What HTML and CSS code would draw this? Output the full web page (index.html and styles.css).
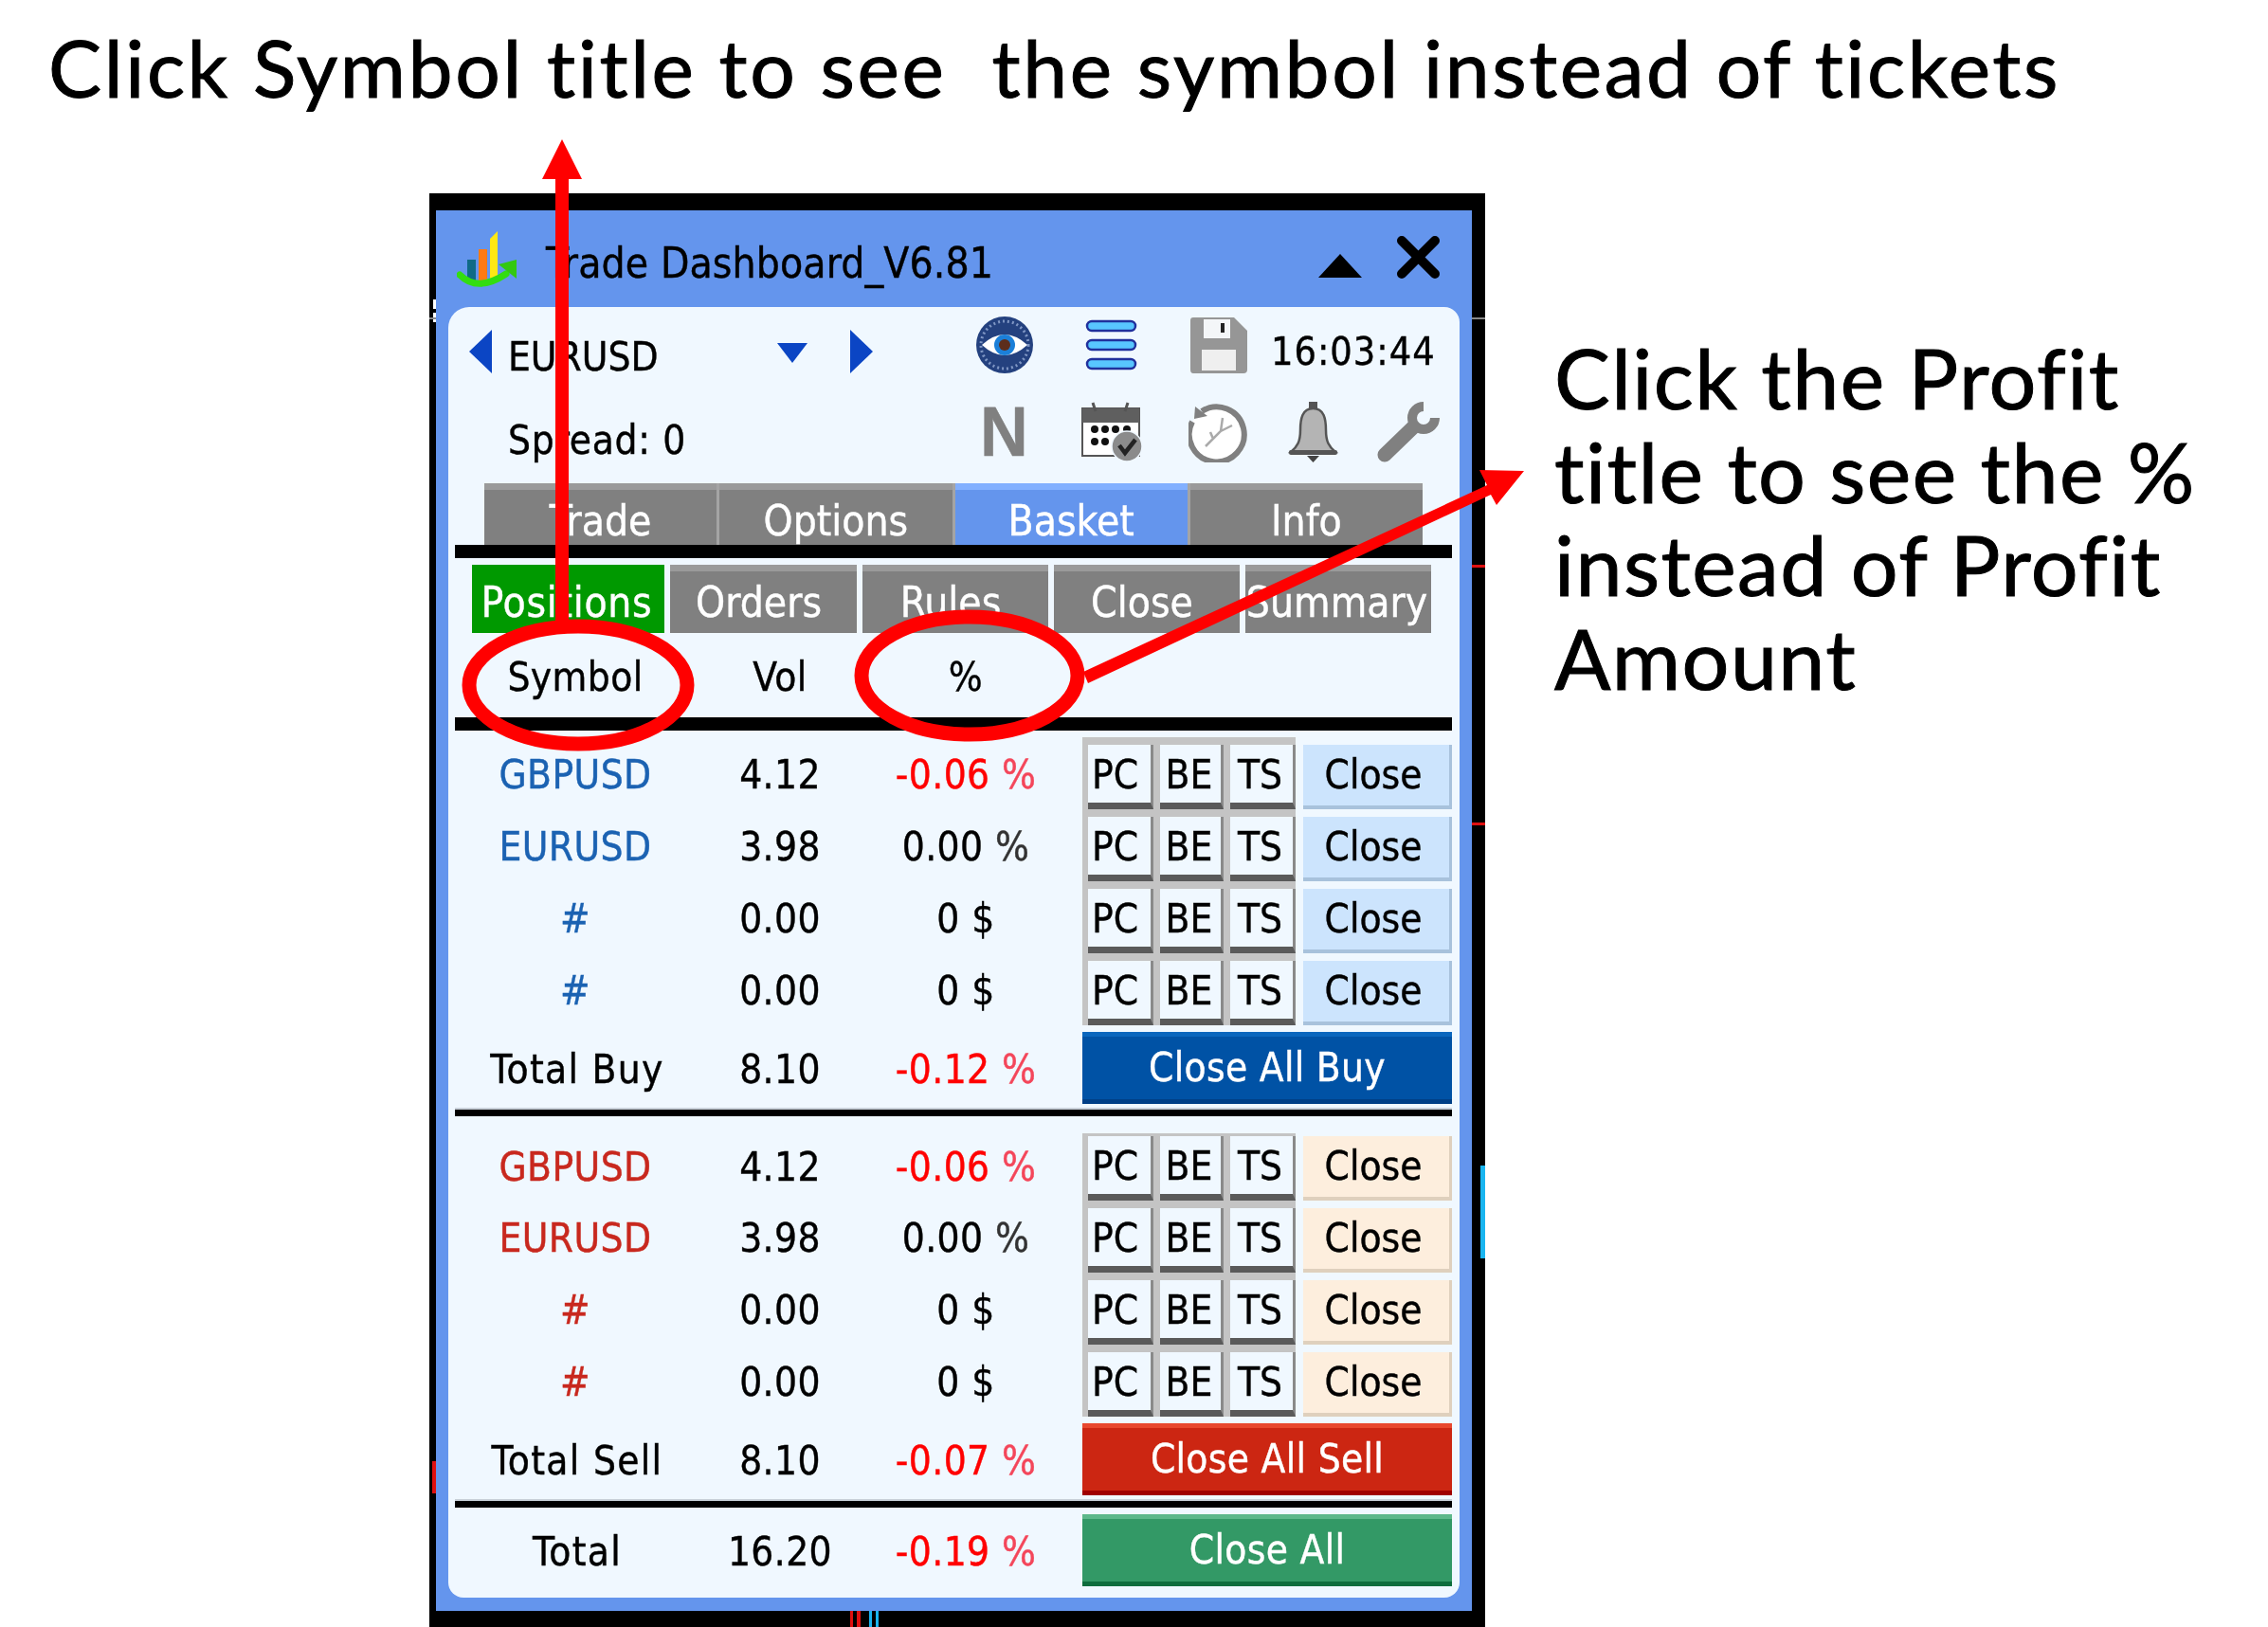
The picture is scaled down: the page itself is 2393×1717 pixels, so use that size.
FILE: index.html
```html
<!DOCTYPE html>
<html lang="en">
<head>
<meta charset="utf-8">
<title>Trade Dashboard</title>
<link rel="stylesheet" href="styles.css">
</head>
<body>
<p class="caption">Click Symbol title to see&nbsp; the symbol instead of tickets</p>
<div class="stage">
  <div class="window">
    <span class="mark mark-dots"></span>
    <span class="mark mark-g1"></span>
    <span class="mark mark-g2"></span>
    <span class="mark mark-r1"></span>
    <span class="mark mark-r2"></span>
    <span class="mark mark-r3"></span>
    <span class="mark mark-b1"></span>
    <span class="mark mark-b2"></span>
    <span class="mark mark-b3"></span>
    <div class="chrome">
      <div class="titlebar">
        <svg class="logo" width="66" height="68" viewBox="0 0 66 68">
          <rect x="11" y="33" width="9" height="24" fill="#0f6a86"/>
          <rect x="23" y="22" width="9" height="36" fill="#ff7a12"/>
          <path d="M35 11 L43 3 V54 H35Z" fill="#ffe814"/>
          <path d="M3 49 Q22 68 52 48" fill="none" stroke="#33dd11" stroke-width="7" stroke-linecap="round"/>
          <path d="M44 38 L63 33 V53Z" fill="#33c811"/>
        </svg>
        <span class="title">Trade Dashboard_V6.81</span>
        <svg class="tri-up" width="46" height="25" viewBox="0 0 46 25"><path d="M23 0 L46 25 H0Z" fill="#000"/></svg>
        <svg class="close-x" width="47" height="47" viewBox="0 0 47 47"><path d="M6 6 L41 41 M41 6 L6 41" stroke="#000" stroke-width="10" stroke-linecap="round"/></svg>
      </div>
      <div class="panel">
        <div class="tools tools-a">
          <span></span>
          <svg class="arrow" width="24" height="46" viewBox="0 0 24 46"><path d="M24 0 V46 L0 23Z" fill="#0b45c4"/></svg>
          <span class="pair">EURUSD</span>
          <svg class="arrow arrow-down" width="32" height="21" viewBox="0 0 32 21"><path d="M0 0 H32 L16 21Z" fill="#0b45c4"/></svg>
          <svg class="arrow" width="24" height="46" viewBox="0 0 24 46"><path d="M0 0 V46 L24 23Z" fill="#0b45c4"/></svg>
          <svg width="62" height="60" viewBox="0 0 62 60">
            <circle cx="31" cy="30" r="30" fill="#24417f"/>
            <circle cx="31" cy="30" r="25" fill="none" stroke="#7f96c4" stroke-width="3" stroke-dasharray="2 3"/>
            <path d="M7 30 Q31 8 55 30 Q31 52 7 30Z" fill="#fff"/>
            <circle cx="31" cy="30" r="11" fill="#1b7fd8"/>
            <circle cx="31" cy="30" r="6" fill="#5c2d1c"/>
          </svg>
          <svg width="55" height="56" viewBox="0 0 55 56">
            <rect x="2" y="3" width="51" height="10" rx="5" fill="#58c6ff" stroke="#20309c" stroke-width="2.5"/>
            <rect x="2" y="23" width="51" height="10" rx="5" fill="#58c6ff" stroke="#20309c" stroke-width="2.5"/>
            <rect x="2" y="43" width="51" height="10" rx="5" fill="#58c6ff" stroke="#20309c" stroke-width="2.5"/>
          </svg>
          <svg width="62" height="60" viewBox="0 0 62 60">
            <path d="M4 1 H47 L61 15 V56 Q61 60 57 60 H4 Q1 60 1 56 V4 Q1 1 4 1Z" fill="#969696"/>
            <rect x="15" y="3" width="28" height="20" fill="#f4f6f8"/>
            <rect x="33" y="7" width="4" height="10" fill="#222"/>
            <rect x="13" y="35" width="36" height="22" fill="#efefef"/>
          </svg>
          <span class="clock-text">16:03:44</span>
        </div>
        <div class="tools tools-b">
          <span></span>
          <span class="spread">Spread: 0</span>
          <span class="news">N</span>
          <svg width="65" height="64" viewBox="0 0 65 64">
            <rect x="1" y="7" width="60" height="50" fill="#fff" stroke="#555" stroke-width="2"/>
            <rect x="1" y="7" width="60" height="15" fill="#5f5f5f"/>
            <path d="M12 1 L15 10 M49 1 L46 10" stroke="#555" stroke-width="3"/>
            <g fill="#111">
              <circle cx="14" cy="29" r="4"/><circle cx="25" cy="29" r="4"/><circle cx="36" cy="29" r="4"/><circle cx="48" cy="29" r="4"/>
              <circle cx="14" cy="42" r="4"/><circle cx="25" cy="42" r="4"/>
            </g>
            <circle cx="48" cy="47" r="16" fill="#8b8b8b" stroke="#f0f8ff" stroke-width="1.5"/>
            <path d="M40 46 L46 54 L57 40" fill="none" stroke="#222" stroke-width="4.5"/>
          </svg>
          <svg width="65" height="63" viewBox="0 0 65 63">
            <path d="M14 9 A29 29 0 1 1 4 20" fill="#fff" stroke="#808080" stroke-width="6"/>
            <path d="M7 4 L20 14 L6 17Z" fill="#808080"/>
            <path d="M18 46 L34 30 L36 16 M34 30 L46 24 M26 38 L23 31" fill="none" stroke="#aaa" stroke-width="2.5"/>
          </svg>
          <svg width="53" height="64" viewBox="0 0 53 64">
            <rect x="22" y="0" width="9" height="9" fill="#555"/>
            <path d="M26.5 7 C15 7 13 18 13 30 C13 42 10 47 3 53 H50 C43 47 40 42 40 30 C40 18 38 7 26.5 7Z" fill="#b4b4b4" stroke="#555" stroke-width="2.5"/>
            <rect x="1" y="51" width="51" height="5" rx="2" fill="#555"/>
            <path d="M20 57 H33 L26.5 64Z" fill="#444"/>
          </svg>
          <svg width="66" height="64" viewBox="0 0 66 64">
            <path d="M8 56 L38 27" stroke="#808080" stroke-width="15" stroke-linecap="round"/>
            <path d="M61 17 A12 12 0 1 1 49 5" fill="none" stroke="#808080" stroke-width="10"/>
          </svg>
        </div>
        <div class="tabs">
          <span class="tab">Trade</span>
          <span class="tab">Options</span>
          <span class="tab tab-on">Basket</span>
          <span class="tab">Info</span>
        </div>
        <div class="rule rule-thick"></div>
        <div class="subtabs">
          <span class="subtab subtab-on">Positions</span>
          <span class="subtab">Orders</span>
          <span class="subtab">Rules</span>
          <span class="subtab">Close</span>
          <span class="subtab">Summary</span>
        </div>
        <div class="row row-head"><span>Symbol</span><span>Vol</span><span class="pct">%</span></div>
        <div class="rule rule-thick"></div>

        <div class="section buy">
          <div class="row"><span class="sym">GBPUSD</span><span>4.12</span><span class="loss">-0.06 <i>%</i></span><div class="actions"><div class="group"><b>PC</b><b>BE</b><b>TS</b></div><b class="close">Close</b></div></div>
          <div class="row"><span class="sym">EURUSD</span><span>3.98</span><span>0.00 <i class="dim">%</i></span><div class="actions"><div class="group"><b>PC</b><b>BE</b><b>TS</b></div><b class="close">Close</b></div></div>
          <div class="row"><span class="sym">#</span><span>0.00</span><span>0 $</span><div class="actions"><div class="group"><b>PC</b><b>BE</b><b>TS</b></div><b class="close">Close</b></div></div>
          <div class="row"><span class="sym">#</span><span>0.00</span><span>0 $</span><div class="actions"><div class="group"><b>PC</b><b>BE</b><b>TS</b></div><b class="close">Close</b></div></div>
          <div class="row row-total"><span class="total-label">Total Buy</span><span>8.10</span><span class="loss">-0.12 <i>%</i></span><b class="bigbtn big-buy">Close All Buy</b></div>
        </div>
        <div class="rule rule-thin"></div>
        <div class="section sell">
          <div class="row"><span class="sym">GBPUSD</span><span>4.12</span><span class="loss">-0.06 <i>%</i></span><div class="actions"><div class="group"><b>PC</b><b>BE</b><b>TS</b></div><b class="close">Close</b></div></div>
          <div class="row"><span class="sym">EURUSD</span><span>3.98</span><span>0.00 <i class="dim">%</i></span><div class="actions"><div class="group"><b>PC</b><b>BE</b><b>TS</b></div><b class="close">Close</b></div></div>
          <div class="row"><span class="sym">#</span><span>0.00</span><span>0 $</span><div class="actions"><div class="group"><b>PC</b><b>BE</b><b>TS</b></div><b class="close">Close</b></div></div>
          <div class="row"><span class="sym">#</span><span>0.00</span><span>0 $</span><div class="actions"><div class="group"><b>PC</b><b>BE</b><b>TS</b></div><b class="close">Close</b></div></div>
          <div class="row row-total"><span class="total-label">Total Sell</span><span>8.10</span><span class="loss">-0.07 <i>%</i></span><b class="bigbtn big-sell">Close All Sell</b></div>
        </div>
        <div class="rule rule-thin"></div>
        <div class="row row-total row-grand"><span class="total-label">Total</span><span>16.20</span><span class="loss">-0.19 <i>%</i></span><b class="bigbtn big-all">Close All</b></div>
      </div>
    </div>
  </div>
  <p class="note">Click the Profit<br>title to see the %<br>instead of Profit<br>Amount</p>
</div>
<svg class="overlay" width="2393" height="1717" viewBox="0 0 2393 1717">
  <path d="M593 147 L614 189 H600 V656 H586 V189 H572Z" fill="#f00"/>
  <ellipse cx="610" cy="723" rx="115" ry="62" fill="none" stroke="#f00" stroke-width="15"/>
  <ellipse cx="1023" cy="713" rx="114" ry="62" fill="none" stroke="#f00" stroke-width="15"/>
  <path d="M1608 497 L1561 496 L1569 512 L1143 709 L1148 721 L1573 522 L1579 533Z" fill="#f00"/>
</svg>
</body>
</html>
```
FILE: styles.css
```css
html, body { margin: 0; padding: 0; background: #fff; }
body {
  width: 2393px;
  height: 1717px;
  overflow: hidden;
  position: relative;
  font-family: "DejaVu Sans Condensed", "DejaVu Sans", sans-serif;
  color: #000;
}
.caption, .note {
  margin: 0;
  font-family: "Lato", "Noto Sans", sans-serif;
  font-weight: 400;
  font-variant-ligatures: none;
  color: #000;
  white-space: nowrap;
  -webkit-text-stroke: 1px #000;
}
.caption {
  height: 204px;
  box-sizing: border-box;
  padding: 16px 0 0 51px;
  font-size: 84px;
  line-height: 110px;
  letter-spacing: 2.6px;
}
.stage { display: flex; align-items: flex-start; height: 1513px; }
.window {
  position: relative;
  box-sizing: border-box;
  width: 1114px;
  height: 1513px;
  margin-left: 453px;
  padding: 18px 14px 17px 7px;
  background: #000;
  flex: none;
}
.mark { position: absolute; display: block; }
.mark-dots { left: 4px; top: 112px; width: 4px; height: 26px; background: repeating-linear-gradient(#fff 0 10px, #000 10px 14px); }
.mark-g1 { left: 0; top: 131px; width: 7px; height: 2px; background: #888; }
.mark-g2 { right: 0; top: 131px; width: 14px; height: 2px; background: #888; }
.mark-r1 { right: 0; top: 392px; width: 14px; height: 3px; background: #e01010; }
.mark-r2 { right: 0; top: 664px; width: 14px; height: 3px; background: #e01010; }
.mark-r3 { left: 3px; top: 1338px; width: 4px; height: 34px; background: #e01010; }
.mark-b1 { right: 0; top: 1026px; width: 5px; height: 98px; background: #19b5f0; }
.mark-b2 { left: 444px; bottom: 0; width: 11px; height: 17px; background: linear-gradient(90deg, #e01010 0 3px, #000 3px 7px, #e01010 7px); }
.mark-b3 { left: 464px; bottom: 0; width: 10px; height: 17px; background: linear-gradient(90deg, #19b5f0 0 3px, #000 3px 7px, #19b5f0 7px); }

.chrome {
  height: 100%;
  background: #6495ed;
  filter: blur(0.6px);
  -webkit-text-stroke: 0.4px currentColor;
}
.titlebar {
  display: flex;
  align-items: center;
  height: 102px;
  box-sizing: border-box;
  padding: 0 33px 0 22px;
  position: relative;
}
.logo { margin-top: 4px; flex: none; }
.title { margin: 10px 0 0 28px; font-size: 44px; line-height: 52px; white-space: nowrap; letter-spacing: .1px; }
.tri-up { margin: 15px 0 0 auto; flex: none; }
.close-x { margin: -3px 0 0 36px; flex: none; }
.panel {
  box-sizing: border-box;
  height: 1362px;
  margin: 0 13px;
  padding: 0 8px 0 7px;
  background: #f0f8ff;
  border-radius: 22px 16px 16px 16px;
  font-size: 44px;
  line-height: 52px;
}
.tools { display: grid; align-items: center; }
.tools-a {
  height: 70px;
  padding-top: 9px;
  box-sizing: border-box;
  grid-template-rows: 61px;
  grid-template-columns: 15px 41px 284px 77px 132px 116px 110px 88px 1fr;
}
.tools-b {
  height: 116px;
  box-sizing: border-box;
  padding: 30px 0 22px;
  grid-template-rows: 64px;
  grid-template-columns: 56px 501px 104px 113px 105px 94px 1fr;
}
.tools svg { display: block; }
.arrow { margin-top: 14px; }
.arrow-down { margin-top: 18px; }
.pair { margin-top: 26px; white-space: nowrap; font-size: 42px; }
.clock-text { margin-top: 15px; white-space: nowrap; font-size: 41px; letter-spacing: 1px; margin-left: -2px; }
.spread { margin-top: 18px; white-space: nowrap; font-size: 42px; letter-spacing: .7px; }
.news { font: 700 74px/64px "Liberation Sans", sans-serif; color: #808080; transform: scaleX(.95); transform-origin: 0 50%; margin-left: -3px; }

.tabs {
  display: grid;
  grid-template-columns: repeat(4, 1fr);
  gap: 3px;
  width: 990px;
  margin-left: 31px;
  background: #a4a4a4;
}
.tab, .subtab {
  box-sizing: border-box;
  text-align: center;
  color: #fff;
  background: #808080;
  border-top: 7px solid #9a9a9a;
  white-space: nowrap;
}
.tab { height: 65px; line-height: 66px; }
.tab-on { background: #6495ed; border-top-color: #82b0ff; }
.rule { background: #000; }
.rule-thick { height: 14px; }
.rule-thin { height: 7px; box-shadow: 0 -2px 0 #c8d0d8; }
.subtabs {
  display: grid;
  grid-template-columns: 203px 197px 196px 196px 196px;
  gap: 6px;
  margin: 7px 0 0 18px;
}
.subtab { height: 72px; line-height: 66px; padding-right: 10px; }
.subtab:first-child { padding-right: 3px; letter-spacing: .7px; }
.subtab:last-child { padding-right: 3px; }
.subtab-on { background: #009900; border-top-color: #009900; }

.row {
  display: grid;
  grid-template-columns: 254px 178px 214px 1fr;
  align-items: center;
  height: 76px;
  text-align: center;
  white-space: nowrap;
  font-size: 42px;
}
.row > span { padding-top: 4px; letter-spacing: .4px; }
.row i { font-style: normal; }
.row-head { height: 89px; }
.row-head > span { padding: 5px 0 0; }
.row > .total-label { letter-spacing: 1.3px; padding-left: 4px; }
.section { padding-top: 7px; }
.section.sell { padding-top: 18px; }
.sell .row:first-child { height: 71px; }
.sell .row:first-child > span { padding-top: 0; }
.sell .row:first-child .group { height: 71px; }
.buy .sym { color: #1b62b2; }
.sell .sym { color: #c8281e; }
.loss { color: #f00; }
.loss i { color: #f4465a; }
.dim { color: #333; }
.actions {
  display: flex;
  height: 100%;
  margin-left: 16px;
}
.group {
  display: grid;
  grid-template-columns: 69px 67px 69px;
  column-gap: 7px;
  box-sizing: border-box;
  width: 225px;
  height: 76px;
  padding-left: 6px;
  align-items: end;
  background: #c4c4c4;
  flex: none;
}
.group b {
  display: block;
  box-sizing: border-box;
  height: 68px;
  padding: 6px 3px 0 0;
  font-weight: 400;
  background: #f0f8ff;
  border-right: 3px solid #8a8a8a;
  border-bottom: 7px solid #5a5a5a;
}
.group b:first-child { padding-right: 9px; }
.close {
  display: block;
  box-sizing: border-box;
  align-self: flex-end;
  width: 157px;
  height: 68px;
  margin-left: 8px;
  padding: 6px 6px 0 0;
  font-weight: 400;
  border-right: 3px solid;
  border-bottom: 4px solid;
}
.buy .close { background: #cce4fd; border-color: #a8c2dc; }
.sell .close { background: #fdeedd; border-color: #dfd0bd; }
.row-total { height: 89px; }
.bigbtn {
  display: block;
  box-sizing: border-box;
  height: 76px;
  margin-left: 16px;
  padding-top: 7px;
  font-weight: 400;
  color: #fff;
  border-top: 5px solid;
  border-bottom: 5px solid;
  letter-spacing: .3px;
}
.big-buy { background: #0052a5; border-top-color: #0a66bd; border-bottom-color: #003f86; }
.big-sell { background: #cc2612; border-top-color: #e8482e; border-bottom-color: #a00000; }
.big-all { background: #339966; border-top-color: #5cb88a; border-bottom-color: #0e6d3d; }
.row-grand { margin-top: 7px; height: 76px; }

.note {
  margin-left: 73px;
  padding-top: 145px;
  font-size: 88px;
  line-height: 98.7px;
  letter-spacing: 1.4px;
}
.overlay { position: absolute; left: 0; top: 0; pointer-events: none; }
```
